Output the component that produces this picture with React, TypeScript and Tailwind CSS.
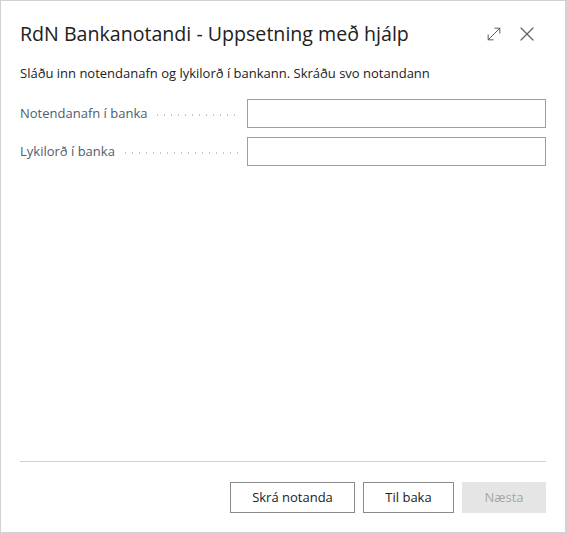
import { MoveDiagonal, X } from 'lucide-react';

function Field({ label }: { label: string }) {
    return (
        <div className="flex items-center h-[29px]">
            <div className="flex items-center w-[227px] text-[13px] text-[#505c6d] overflow-hidden">
                <span className="whitespace-nowrap">{label}</span>
                <span className="flex-1 ml-[7px] mr-[8px] h-[2px] mt-[3px] bg-[radial-gradient(circle,#c4c4c4_0.9px,transparent_1.1px)] bg-[length:7px_2px]" />
            </div>
            <input className="flex-1 h-[29px] border border-[#9e9e9e] bg-white outline-none px-2 text-[13px]" />
        </div>
    );
}

export default function App() {
    return (
        <div
            className="w-[567px] h-[534px] bg-white border-l border-t border-r-2 border-b-2 border-[#d2d2d2] flex flex-col text-[#212121]"
            style={{ fontFamily: '"Segoe UI", "Open Sans", sans-serif' }}
        >
            {/* Header */}
            <div className="flex items-center justify-between pl-[19px] pr-[26px] pt-[16px] h-[50px]">
                <h1 className="text-[19.6px] leading-none">RdN Bankanotandi - Uppsetning með hjálp</h1>
                <div className="flex items-center gap-[11px] text-[#5f5f5f]">
                    <MoveDiagonal className="w-[20px] h-[20px]" strokeWidth={1.2} />
                    <X className="w-[24px] h-[24px]" strokeWidth={1.2} />
                </div>
            </div>

            <p className="px-[19px] mt-[13px] text-[13px] leading-[18px]">
                Sláðu inn notendanafn og lykilorð í bankann. Skráðu svo notandann
            </p>

            <div className="pl-[19px] pr-[19px] mt-[17px] flex flex-col gap-[9px]">
                <Field label="Notendanafn í banka" />
                <Field label="Lykilorð í banka" />
            </div>

            <div className="flex-1" />

            {/* Footer */}
            <div className="mx-[19px] border-t border-[#d0d0d0] pt-[20px] pb-[19px] flex justify-end gap-[8px]">
                <button className="h-[31px] w-[125px] border border-[#8a8a8a] text-[13px] bg-white">Skrá notanda</button>
                <button className="h-[31px] w-[91px] border border-[#8a8a8a] text-[13px] bg-white">Til baka</button>
                <button className="h-[31px] w-[84px] bg-[#e5e5e5] text-[#a6a6a6] text-[13px]" disabled>
                    Næsta
                </button>
            </div>
        </div>
    );
}
